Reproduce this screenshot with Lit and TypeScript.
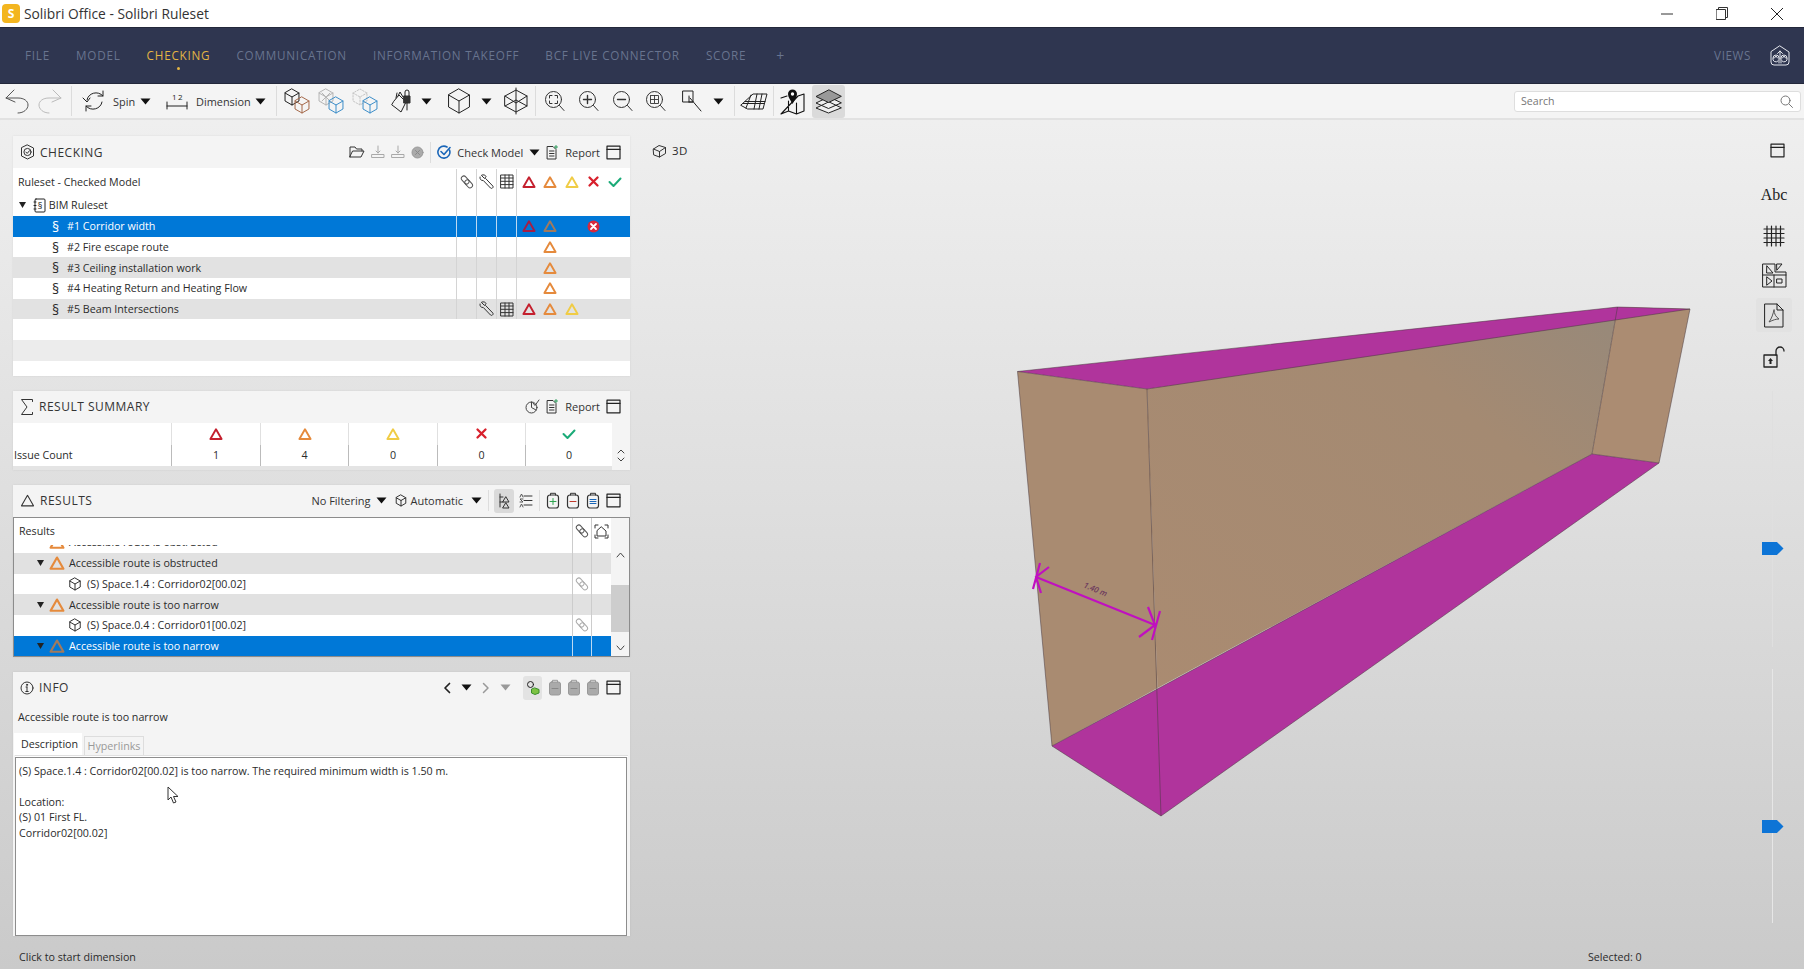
import { LitElement, html, css, svg } from "lit";
import { customElement } from "lit/decorators.js";

const RED = "#c4202e", ORG = "#e58a3c", YEL = "#f0cc45", XRED = "#d8202c", GRN = "#1bab78";

const ic = (w: number, h: number, c: any, vw = w, vh = h) =>
  html`<svg class="ic" width=${w} height=${h} viewBox="0 0 ${vw} ${vh}" fill="none" stroke="#333" stroke-width="1" stroke-linecap="round" stroke-linejoin="round">${c}</svg>`;

const tri = (col: string, s = 14, sw = 1.9) => ic(s, s, svg`<path d="M7 2.2 L12.6 12 H1.4 Z" stroke=${col} stroke-width=${sw}/>`, 14, 14);
const xm = (s = 13) => ic(s, s, svg`<path d="M2.5 2.5 L10.5 10.5 M10.5 2.5 L2.5 10.5" stroke=${XRED} stroke-width="2.3"/>`, 13, 13);
const chk = (s = 14) => ic(s, s, svg`<path d="M1.5 7 L5.5 11 L12.5 3.5" stroke=${GRN} stroke-width="2"/>`, 14, 14);
const xball = () => ic(13, 13, svg`<circle cx="6.5" cy="6.5" r="6" fill="#d8283c" stroke="none"/><path d="M4 4 L9 9 M9 4 L4 9" stroke="#fff" stroke-width="1.8"/>`);
const clip = (col = "#555") => ic(14, 16, svg`<g stroke=${col} transform="rotate(-42 7 8)"><rect x="4.5" y="0.8" width="5" height="9" rx="2.5"/><rect x="4.5" y="6" width="5" height="9" rx="2.5"/></g>`);
const wrench = () => ic(16, 16, svg`<path d="M2.5 1.5 L5.5 4.5 L7 2.5 C6.5 1 4.5 0.5 3 1 M1 3 C0.5 5 2 6.8 4.3 6.5 L11.5 14 C12.8 15.3 15 13.2 13.8 12 L6.6 4.5"/>`);
const tbl = () => ic(14, 15, svg`<rect x="1" y="1" width="12" height="13"/><path d="M1 4 H13 M1 7.3 H13 M1 10.6 H13 M5 1 V14 M9 1 V14"/>`);
const win = () => ic(15, 15, svg`<rect x="1" y="1.2" width="13" height="12.6" stroke="#222" stroke-width="1.2"/><path d="M1 4.4 H14" stroke="#222" stroke-width="1.2"/>`);
const arrowDn = (col = "#111") => ic(11, 7, svg`<path d="M0.5 0.5 H10.5 L5.5 6.5 Z" fill=${col} stroke="none"/>`);
const hexCube = (cx: number, cy: number, r: number, col: string, extra = "") => {
  const x = r * 0.87, y = r * 0.5;
  return svg`<path stroke=${col} stroke-dasharray=${extra} d="M${cx} ${cy - r} L${cx + x} ${cy - y} V${cy + y} L${cx} ${cy + r} L${cx - x} ${cy + y} V${cy - y} Z M${cx - x} ${cy - y} L${cx} ${cy} L${cx + x} ${cy - y} M${cx} ${cy} V${cy + r}"/>`;
};
const cube = (s = 14) => ic(s, s, hexCube(7, 7, 6, "#333"), 14, 14);
const zoomI = (inner: any) => ic(21, 22, svg`<circle cx="9.5" cy="9.5" r="8"/><path d="M15.5 15.5 L20 20.5"/>${inner}`);
const clipboard = (mark: any, col = "#333") => ic(14, 17, svg`<rect x="1.5" y="3" width="11" height="13" rx="2.5" stroke=${col} stroke-width="1.2"/><path d="M4.5 3 V1.3 H9.5 V3" stroke=${col}/>${mark}`);
const gclip = () => ic(14, 17, svg`<rect x="1.5" y="3" width="11" height="13" rx="2" fill="#aaa" stroke="#999"/><path d="M4.5 3 V1.3 H9.5 V3" stroke="#999"/><path d="M4 9.5 H10" stroke="#888"/>`);

const tools: { i: any; ml: number }[] = [
  { i: ic(25, 25, svg`<path d="M10 1 L2 9 L11 13 M2 9 H14 C20 9 24 12 24 16 C24 20 20 24 14 24" stroke="#555"/>`), ml: 0 },
  { i: ic(25, 25, svg`<path d="M15 1 L23 9 L14 13 M23 9 H11 C5 9 1 12 1 16 C1 20 5 24 11 24" stroke="#bbb"/>`), ml: 9 },
  { i: html`<span class="sep"></span>`, ml: 8 },
  { i: ic(25, 24, svg`<path d="M5 11 C6 4 16 1 21 7 M21 2 V7 H16 M20 13 C19 20 9 23 4 17 M4 22 V17 H9 M1 9 L5 13 L8 9" stroke="#222"/>`), ml: 10 },
  { i: html`<span class="tx">Spin</span>`, ml: 6 },
  { i: arrowDn(), ml: 5 },
  { i: ic(22, 20, svg`<path d="M1 11 V18 M21 11 V18 M1 15 H21" stroke="#222"/><text x="6" y="9" font-size="8" stroke="none" fill="#222" font-family="Open Sans">1</text><text x="12" y="9" font-size="8" stroke="none" fill="#222" font-family="Open Sans">2</text>`), ml: 15 },
  { i: html`<span class="tx">Dimension</span>`, ml: 8 },
  { i: arrowDn(), ml: 4 },
  { i: html`<span class="sep"></span>`, ml: 10 },
  { i: ic(27, 26, svg`${hexCube(9, 9, 8, "#222")}${hexCube(19, 17, 8, "#a5694a")}`), ml: 6 },
  { i: ic(27, 26, svg`${hexCube(9, 9, 8, "#b5b5b5")}<path d="M5 5 L13 13 M13 5 L5 13" stroke="#b5b5b5"/>${hexCube(19, 17, 8, "#3d8ec9")}`), ml: 7 },
  { i: ic(27, 26, svg`${hexCube(9, 9, 8, "#c4c4c4", "1.5 1.5")}${hexCube(19, 17, 8, "#3d8ec9")}`), ml: 7 },
  { i: ic(24, 26, svg`<path d="M4 13 L9 7 L12 10 L16 14 L11 24 L6 20 L2 17 Z M8 8 L10 4 L13 9 M6 10 L7 5" stroke="#222"/><rect x="14" y="8" width="6" height="7" fill="#333"/><path d="M15 8 V4 A2 2 0 0 1 19 4 V8 M17 15 V22" stroke="#222"/>`), ml: 12 },
  { i: arrowDn(), ml: 7 },
  { i: ic(24, 26, hexCube(12, 13, 12, "#222")), ml: 15 },
  { i: arrowDn(), ml: 10 },
  { i: ic(24, 28, svg`<path d="M12 1 V27 M1 9 L12 3 L23 9 V19 L12 25 L1 19 Z M1 9 L12 16 L23 9 M1 19 L12 13 L23 19" stroke="#222"/>`), ml: 12 },
  { i: html`<span class="sep"></span>`, ml: 7 },
  { i: zoomI(svg`<path d="M5.5 8 V5.5 H8 M11 5.5 H13.5 V8 M13.5 11 V13.5 H11 M8 13.5 H5.5 V11"/>`), ml: 8 },
  { i: zoomI(svg`<path d="M5.5 9.5 H13.5 M9.5 5.5 V13.5" stroke-width="1.4"/>`), ml: 13 },
  { i: zoomI(svg`<path d="M5.5 9.5 H13.5" stroke-width="1.4"/>`), ml: 13 },
  { i: zoomI(svg`<rect x="5.5" y="5.5" width="8" height="8" stroke-dasharray="1 1"/><path d="M9.5 5.5 V13.5 M5.5 9.5 H13.5" stroke-dasharray="1 1"/>`), ml: 12 },
  { i: ic(20, 22, svg`<rect x="1" y="1" width="10" height="11" stroke="#222"/><path d="M7 6 V12 M7 12 H11 M8 8 L19 21" stroke="#222"/>`), ml: 16 },
  { i: arrowDn(), ml: 11 },
  { i: html`<span class="sep"></span>`, ml: 10 },
  { i: ic(28, 20, svg`<path d="M1 14 L13 3 H27 L23 18 H8 Z M5 10.5 H25 M3 12.5 H24 M11 4 L6 17 M17 3 L14 18 M22 3 L19 18" stroke="#222"/>`), ml: 5 },
  { i: html`<span class="sep"></span>`, ml: 5 },
  { i: ic(25, 27, svg`<path d="M1 10 L7 8 M18 8 L24 6 V23 L16.5 26 L8.5 23 L1 26 Z M8.5 13 V23 M16.5 15 V26" stroke="#111" stroke-width="1.1"/><path d="M12.5 16 C10.5 12 8 9.5 8 6 A4.5 4.5 0 0 1 17 6 C17 9.5 14.5 12 12.5 16 Z" fill="#111" stroke="none"/><circle cx="12.5" cy="6" r="1.7" fill="#fff" stroke="none"/>`), ml: 6 },
  { i: html`<span class="lay active">${ic(27, 25, svg`<path d="M13.5 13 L1 19 L13.5 24 L26 19 Z M13.5 8 L1 14 L13.5 19.5 L26 14 Z" stroke="#222" fill="#f0f0f0"/><path d="M13.5 1 L1 7.5 L13.5 13.5 L26 7.5 Z" stroke="#222" fill="#999"/>`)}</span>`, ml: 7 },
];

const tabs = [
  ["FILE", 0], ["MODEL", 0], ["CHECKING", 1], ["COMMUNICATION", 0], ["INFORMATION TAKEOFF", 0], ["BCF LIVE CONNECTOR", 0], ["SCORE", 0], ["+", 0],
] as [string, number][];

const rules = [
  { t: "#1 Corridor width", sel: 1, flags: [RED, ORG, null, "x", null] },
  { t: "#2 Fire escape route", flags: [null, ORG] },
  { t: "#3 Ceiling installation work", alt: 1, flags: [null, ORG] },
  { t: "#4 Heating Return and Heating Flow", flags: [null, ORG] },
  { t: "#5 Beam Intersections", alt: 1, tools: 1, flags: [RED, ORG, YEL] },
];

const results = [
  { t: "Accessible route is obstructed", k: "g", alt: 1 },
  { t: "(S) Space.1.4 : Corridor02[00.02]", k: "s" },
  { t: "Accessible route is too narrow", k: "g", alt: 1 },
  { t: "(S) Space.0.4 : Corridor01[00.02]", k: "s" },
  { t: "Accessible route is too narrow", k: "g", sel: 1 },
];

@customElement("app-root")
export class AppRoot extends LitElement {
  static styles = css`
    :host { display: block; width: 1804px; height: 969px; overflow: hidden; font-family: "Open Sans", "Noto Sans", sans-serif; font-size: 10.7px; color: #2b2b2b; }
    * { box-sizing: border-box; }
    .ic { display: block; flex: none; }
    .app { display: flex; flex-direction: column; height: 969px; }
    .title { height: 27px; background: #fff; display: flex; align-items: center; padding-left: 2px; font-size: 13.8px; color: #333; flex: none; }
    .logo { width: 18px; height: 19px; border-radius: 4px; background: #f3b51f; color: #fff; font-weight: 700; font-size: 12px; display: flex; align-items: center; justify-content: center; margin-right: 4px; }
    .wc { margin-left: auto; display: flex; align-items: center; }
    .wc span { width: 55px; display: flex; justify-content: center; }
    .nav { height: 57px; background: #2f3650; border-top: 1px solid #23283b; border-bottom: 1px solid #23283b; display: flex; align-items: center; padding: 0 14px 1px 25px; flex: none; }
    .tab { font-size: 11.7px; letter-spacing: 0.78px; color: #68748f; margin-right: 26px; position: relative; white-space: nowrap; }
    .tab.on { color: #e3b544; }
    .tab.on::after { content: ""; position: absolute; left: 50%; bottom: -7px; width: 3px; height: 3px; margin-left: -1.5px; border-radius: 50%; background: #e3b544; }
    .plus { font-size: 14px; margin-left: 4px; }
    .views { margin-left: auto; margin-right: 19px; letter-spacing: .6px; }
    .tb { height: 36px; background: #f4f4f4; border-bottom: 2px solid #e2e2e2; display: flex; align-items: center; padding-left: 4px; flex: none; position: relative; }
    .tool { display: flex; align-items: center; }
    .tx { font-size: 10.9px; color: #333; }
    .sep { display: block; width: 1px; height: 30px; background: #dcdcdc; }
    .lay { display: flex; width: 33px; height: 33px; align-items: center; justify-content: center; }
    .lay.active { background: #dadada; border-radius: 3px; }
    .lay.t { width: 20px; height: 24px; margin: 0 -1px; }
    .lay.i { width: 19px; height: 24px; background: #e3e3e3; margin-left: 6px; }
    .search { margin-left: auto; margin-right: 3px; width: 287px; height: 21px; background: #fff; border: 1px solid #dedede; border-radius: 3px; display: flex; align-items: center; justify-content: space-between; padding: 0 7px 0 6px; color: #777; font-size: 10.6px; }
    .body { flex: 1; display: flex; min-height: 0; background: linear-gradient(#efefef, #cacaca); }
    .left { width: 643px; flex: none; padding: 16px 0 0 13px; display: flex; flex-direction: column; gap: 15px; }
    .panel { width: 617px; background: #f4f4f4; box-shadow: 0 0 2px rgba(0,0,0,.08); flex: none; }
    .ph { display: flex; align-items: center; height: 32px; padding: 0 9px 0 7px; font-size: 12px; letter-spacing: .5px; color: #333; }
    .ph .lbl { margin-left: 5px; }
    .ph .acts { margin-left: auto; display: flex; align-items: center; gap: 6px; font-size: 11px; letter-spacing: 0; }
    .ph .mv { display: flex; align-items: center; gap: 10px; }
    .ph .cl { display: flex; align-items: center; gap: 5px; }
    .ph .cb2 { margin: 0 -3px 0 2px; }
    .ph .ar2 { margin-left: 2px; }
    .vs { width: 1px; height: 21px; background: #ddd; }
    .row { display: grid; grid-template-columns: 443px 20px 20px 20px 114px; height: 20.7px; background: #fff; align-items: stretch; }
    .row.alt { background: #e2e2e2; }
    .row.alt2 { background: #ececec; }
    .row.sel { background: #0078d7; color: #fff; }
    .row.head { height: 26px; padding-top: 1px; }
    .row.first { height: 22px; }
    .row.last { height: 15px; }
    .row.plain { display: block; }
    .name { display: flex; align-items: center; white-space: nowrap; overflow: hidden; padding-left: 2px; }
    .name.l1 { padding-left: 5px; }
    .name.l2 { padding-left: 36px; }
    .sec { width: 13px; font-size: 14px; margin-right: 5px; text-align: center; }
    .c { border-left: 1px solid #d4d4d4; display: flex; align-items: center; justify-content: center; }
    .sel .c { border-left-color: #bcd9f2; }
    .fl { border-left: 1px solid #d4d4d4; display: flex; align-items: center; padding-left: 1px; }
    .sel .fl { border-left-color: #bcd9f2; }
    .fl span { width: 21.6px; display: flex; justify-content: center; }
    .tg { width: 7px; height: 6px; margin: 0 7px 0 4px; flex: none; }
    .sumgrid { display: grid; grid-template-columns: 158px 89px 88px 89px 88px 87px 18px; background: #fff; }
    .sumgrid > div { height: 22px; display: flex; align-items: center; justify-content: center; border-left: 1px solid #e0e0e0; }
    .sumgrid > .n { justify-content: flex-start; padding-left: 1px; border-left: 0; }
    .sumgrid > .r { height: 21px; border-left-color: #bbb; }
    .sumgrid > .s { background: #f4f4f4; border: 0; }
    .arrows { display: flex; flex-direction: column; align-items: center; gap: 3px; }
    .sumfoot { height: 4px; background: #e4e4e4; width: 599px; }
    .rbox { border: 1px solid #8c8c8c; background: #fff; height: 140px; display: flex; }
    .rt { flex: 1; min-width: 0; }
    .rrow { display: grid; grid-template-columns: 1fr 19px 20px; height: 20.7px; background: #fff; }
    .rrow.alt { background: #e1e1e1; }
    .rrow.sel { background: #0078d7; color: #fff; }
    .rrow.head { height: 27px; }
    .rrow.cut { height: 8px; overflow: hidden; }
    .rrow.cut > * { height: 20.7px; margin-top: -12.7px; }
    .rrow .c { border-left-color: #ccc; }
    .rrow.sel .c { border-left-color: #bcd9f2; }
    .rtxt { display: flex; align-items: center; white-space: nowrap; }
    .rtxt.g { padding-left: 23px; }
    .rtxt.s { padding-left: 54px; }
    .rtxt.g .ti { margin: 0 4px 0 0; }
    .rtxt .cb { margin-right: 5px; }
    .rtxt .tog { width: 5px; flex: none; }
    .scr { width: 18px; flex: none; background: #f4f4f4; display: flex; flex-direction: column; align-items: center; position: relative; }
    .scr .up { margin-top: 34px; }
    .scr .th { position: absolute; left: 0; right: 0; top: 67px; height: 47px; background: #cdcdcd; }
    .scr .dn { margin-top: auto; margin-bottom: 5px; }
    .sub { padding: 6px 0 0 5px; height: 29px; font-size: 10.7px; }
    .tabs { display: flex; align-items: flex-end; gap: 2px; height: 22px; padding-left: 1px; }
    .t1 { height: 22px; padding: 0 7px; background: #fff; display: flex; align-items: center; width: 68px; }
    .t2 { height: 19px; width: 60px; border: 1px solid #ddd; border-bottom: 0; color: #999; display: flex; align-items: center; justify-content: center; }
    .strip { height: 2px; background: #fff; border-top: 1px solid #e0e0e0; margin: 0 2px; }
    .desc { margin: 0 3px 0 2px; height: 179px; border: 1px solid #8d8d8d; background: #fff; padding: 6px 3px; line-height: 15.5px; white-space: pre; position: relative; }
    .cursor { position: absolute; left: 151px; top: 28px; }
    .status { padding: 5px 0 0 6px; margin-top: -6px; }
    .vp { flex: 1; position: relative; display: flex; flex-direction: column; justify-content: space-between; min-width: 0; }
    .vp > svg { position: absolute; left: 0; top: 0; }
    .vh { position: relative; display: flex; align-items: center; gap: 5px; padding: 23px 0 0 9px; font-size: 11.5px; letter-spacing: .4px; }
    .sel0 { position: relative; align-self: flex-start; margin: 0 0 5px 945px; }
    .rail { width: 64px; flex: none; display: flex; flex-direction: column; align-items: center; padding-top: 23px; position: relative; }
    .rail .abc { font-family: "Liberation Serif", serif; font-size: 16px; margin: 28px 0 0 4px; color: #222; height: 18px; line-height: 18px; }
    .rb { display: flex; justify-content: center; margin-left: 4px; }
    .rb.w { margin-left: 10px; }
    .rb.g { margin-top: 21px; }
    .rb.v { margin-top: 16px; }
    .rb.l { margin-top: 14px; }
    .rb.act { background: #e2e2e2; width: 36px; height: 34px; align-items: center; border-radius: 3px; margin-top: 10px; }
    .track { width: 1px; background: #dfdfdf; position: relative; flex: none; }
    .tr1 { height: 256px; margin-top: 23px; }
    .tr2 { height: 254px; margin-top: 22px; background: #e6e6e6; }
    .hd { position: absolute; left: -10px; top: 151px; width: 22px; height: 13px; background: #0d74d6; clip-path: polygon(0 0, 70% 0, 100% 50%, 70% 100%, 0 100%); }
  `;

  render() {
    const tgDown = html`<svg class="tg" viewBox="0 0 7 6"><path d="M0 0 H7 L3.5 6 Z" fill="#222"/></svg>`;
    const small = ic(7, 6, svg`<path d="M0 0 H7 L3.5 6 Z" fill="#222" stroke="none"/>`);
    return html`<div class="app">
      <div class="title">
        <span class="logo">S</span>Solibri Office - Solibri Ruleset
        <span class="wc">
          <span>${ic(12, 12, svg`<path d="M0 6 H12" stroke="#333"/>`)}</span>
          <span>${ic(12, 13, svg`<rect x="0.5" y="2.5" width="9" height="10" stroke="#333"/><path d="M2.5 2.5 V0.5 H11.5 V10.5 H9.5" stroke="#333"/>`)}</span>
          <span>${ic(12, 12, svg`<path d="M0 0 L12 12 M12 0 L0 12" stroke="#222"/>`)}</span>
        </span>
      </div>
      <div class="nav">
        ${tabs.map(([t, on]) => html`<span class="tab ${on ? "on" : ""} ${t === "+" ? "plus" : ""}">${t}</span>`)}
        <span class="tab views">VIEWS</span>
        ${ic(20, 21, svg`<path d="M10 1 L19 7 V17 A3 3 0 0 1 16 20 H4 A3 3 0 0 1 1 17 V7 Z M10 14 V6 M7.5 8.5 L10 6 L12.5 8.5 M3 13 A3 3 0 0 1 9 13 V18 M4.5 13 L6 11 L7.5 13 M11 18 V13 A3 3 0 0 1 17 13 M12.5 13 L14 11 L15.5 13 M3 13 A3 3 0 0 0 8 16 M17 13 A3 3 0 0 1 12 16" stroke="#e6e8ee"/>`)}
      </div>
      <div class="tb">
        ${tools.map((t) => html`<span class="tool" style="margin-left:${t.ml}px">${t.i}</span>`)}
        <div class="search"><span>Search</span>${ic(13, 13, svg`<circle cx="5.5" cy="5.5" r="4.5" stroke="#777"/><path d="M9 9 L12.5 12.5" stroke="#777"/>`)}</div>
      </div>
      <div class="body">
        <div class="left">
          <section class="panel">
            <div class="ph">
              ${ic(15, 16, svg`<path d="M7.5 1 L13.5 4 V12 L7.5 15 L1.5 12 V4 Z" stroke="#333"/><circle cx="7.5" cy="8" r="3.6" stroke="#333"/><path d="M5.8 8 L7.2 9.4 L9.6 6.6" stroke="#333"/>`)}
              <span class="lbl">CHECKING</span>
              <span class="acts">
                ${ic(16, 14, svg`<path d="M1 12 V2 H6 L7.5 4 H13 V6 M1 12 H12 L15 6 H4 Z" stroke="#333"/>`)}
                ${ic(14, 14, svg`<path d="M7 1 V8 M5 6 L7 8 L9 6 M1 9.5 H13 V12.5 H1 Z" stroke="#a9a9a9"/>`)}
                ${ic(14, 14, svg`<path d="M7 1 V8 M5 6 L7 8 L9 6 M1 9.5 H13 V12.5 H1 Z" stroke="#a9a9a9"/>`)}
                ${ic(13, 13, svg`<circle cx="6.5" cy="6.5" r="5.5" fill="#aaa" stroke="#999"/><path d="M4.5 4.5 L8.5 8.5 M8.5 4.5 L4.5 8.5" stroke="#888"/>`)}
                <span class="vs"></span>
                ${ic(14, 14, svg`<path d="M12.5 5 A6 6 0 1 1 10 2" stroke="#1a66b8" stroke-width="1.6"/><path d="M4 6.5 L7 9.5 L13 2.5" stroke="#1a66b8" stroke-width="1.6"/>`)}
                <span>Check Model</span>
                ${arrowDn()}
                ${ic(13, 15, svg`<path d="M1.5 1.5 H7 L10 4.5 V14 H1.5 Z M3.5 6 H8 M3.5 8.5 H8 M3.5 11 H8" stroke="#333"/><path d="M10 0.5 V3.5 M8.5 2 H11.5" stroke="#2a9a5a"/>`)}
                <span>Report</span>
                ${win()}
              </span>
            </div>
            <div class="row head">
              <div class="name l1">Ruleset - Checked Model</div>
              <div class="c">${clip()}</div><div class="c">${wrench()}</div><div class="c">${tbl()}</div>
              <div class="fl"><span>${tri(RED)}</span><span>${tri(ORG)}</span><span>${tri(YEL)}</span><span>${xm()}</span><span>${chk()}</span></div>
            </div>
            <div class="row first">
              <div class="name">${tgDown}${ic(13, 15, svg`<rect x="2" y="1" width="10" height="13" rx="1" stroke="#222"/><path d="M1 4 H3 M1 7.5 H3 M1 11 H3" stroke="#222"/><text x="7" y="10.5" font-size="9" text-anchor="middle" fill="#222" stroke="none">§</text>`)}&nbsp;BIM Ruleset</div>
              <div class="c"></div><div class="c"></div><div class="c"></div><div class="fl"></div>
            </div>
            ${rules.map((r: any) => html`<div class="row ${r.sel ? "sel" : ""} ${r.alt ? "alt" : ""}">
              <div class="name l2"><span class="sec">§</span>${r.t}</div>
              <div class="c"></div>
              <div class="c">${r.tools ? wrench() : ""}</div>
              <div class="c">${r.tools ? tbl() : ""}</div>
              <div class="fl">${r.flags.map((f: any) => html`<span>${f === "x" ? xball() : f ? tri(r.sel ? (f === RED ? "#a51e45" : "#a07a5e") : f) : ""}</span>`)}</div>
            </div>`)}
            <div class="row plain"></div>
            <div class="row plain alt2"></div>
            <div class="row plain last"></div>
          </section>
          <section class="panel">
            <div class="ph">
              ${ic(14, 18, svg`<path d="M12.5 3.5 V1.5 H1.5 L7 9 L1.5 16.5 H12.5 V14.5" stroke="#333"/>`)}
              <span class="lbl">RESULT SUMMARY</span>
              <span class="acts">
                ${ic(15, 15, svg`<circle cx="6.5" cy="8.5" r="5.5" stroke="#444"/><path d="M6.5 3 V8.5 L11 11 M8 4 L10 6.5 L14 1" stroke="#444"/>`)}
                ${ic(13, 15, svg`<path d="M1.5 1.5 H7 L10 4.5 V14 H1.5 Z M3.5 6 H8 M3.5 8.5 H8 M3.5 11 H8" stroke="#333"/><path d="M10 0.5 V3.5 M8.5 2 H11.5" stroke="#2a9a5a"/>`)}
                <span>Report</span>
                ${win()}
              </span>
            </div>
            <div class="sumgrid">
              <div class="n"></div><div>${tri(RED)}</div><div>${tri(ORG)}</div><div>${tri(YEL)}</div><div>${xm()}</div><div>${chk()}</div><div class="s"></div>
              <div class="n r">Issue Count</div>${["1", "4", "0", "0", "0"].map((n) => html`<div class="r">${n}</div>`)}
              <div class="s r"><span class="arrows">${ic(8, 5, svg`<path d="M1 4 L4 1 L7 4" stroke="#444"/>`)}${ic(8, 5, svg`<path d="M1 1 L4 4 L7 1" stroke="#444"/>`)}</span></div>
            </div>
            <div class="sumfoot"></div>
          </section>
          <section class="panel">
            <div class="ph">
              ${tri("#333", 15, 1)}
              <span class="lbl">RESULTS</span>
              <span class="acts">
                <span>No Filtering</span>${arrowDn()}
                <span class="cb2">${ic(12, 13, hexCube(6, 6.5, 5.5, "#333"))}</span>
                <span>Automatic</span><span class="ar2">${arrowDn()}</span>
                <span class="vs"></span>
                <span class="lay t active">${ic(13, 16, svg`<path d="M2 1 V14 M2 4 H5 M2 9 H5" stroke="#333"/><path d="M8 4 L11 9 H5 Z M8 10 L11 15 H5 Z" stroke="#333"/>`)}</span>
                ${ic(14, 15, svg`<path d="M5 3 H13 M5 7.5 H13 M5 12 H13" stroke="#333"/><path d="M1 4 L2.5 1 L4 4 M1 9 H4 L1 6 H4 M1 14 L2.5 11 L4 14" stroke="#555"/>`)}
                <span class="vs"></span>
                ${clipboard(svg`<path d="M4 9.5 H10 M7 6.5 V12.5" stroke="#2ea44f"/>`)}
                ${clipboard(svg`<path d="M4 9.5 H10" stroke="#c0392b"/>`)}
                ${clipboard(svg`<path d="M4 7.5 H10 M4 9.5 H10 M4 11.5 H10" stroke="#1a66b8"/>`)}
                ${win()}
              </span>
            </div>
            <div class="rbox">
              <div class="rt">
                <div class="rrow head">
                  <div class="name l1">Results</div>
                  <div class="c">${clip()}</div>
                  <div class="c">${ic(15, 15, svg`<path d="M1 4 V1 H4 M11 1 H14 V4 M14 11 V14 H11 M4 14 H1 V11 M7.5 3 L12 7 V12 H3 V7 Z" stroke="#333"/>`)}</div>
                </div>
                <div class="rrow cut">
                  <div class="rtxt g">${small}<span class="tog"></span><span class="ti">${tri(ORG, 16)}</span>Accessible route is obstructed</div>
                  <div class="c"></div><div class="c"></div>
                </div>
                ${results.map((r: any) => html`<div class="rrow ${r.alt ? "alt" : ""} ${r.sel ? "sel" : ""}">
                  <div class="rtxt ${r.k}">
                    ${r.k === "g"
                      ? html`${small}<span class="tog"></span><span class="ti">${tri(r.sel ? "#a27a5c" : ORG, 16)}</span>`
                      : html`<span class="cb">${cube()}</span>`}
                    ${r.t}
                  </div>
                  <div class="c">${r.k === "s" ? clip("#aaa") : ""}</div>
                  <div class="c"></div>
                </div>`)}
              </div>
              <div class="scr">
                <span class="up">${ic(9, 6, svg`<path d="M1 5 L4.5 1 L8 5" stroke="#444"/>`)}</span>
                <span class="th"></span>
                <span class="dn">${ic(9, 6, svg`<path d="M1 1 L4.5 5 L8 1" stroke="#444"/>`)}</span>
              </div>
            </div>
          </section>
          <section class="panel">
            <div class="ph">
              ${ic(14, 14, svg`<circle cx="7" cy="7" r="6" stroke="#333"/><path d="M7 6 V10.5 M5.8 10.5 H8.2 M6 6 H7" stroke="#333"/><circle cx="7" cy="3.8" r=".6" fill="#333"/>`)}
              <span class="lbl">INFO</span>
              <span class="acts">
                <span class="mv">
                  ${ic(8, 12, svg`<path d="M6.5 1.5 L2 6 L6.5 10.5" stroke="#222" stroke-width="1.7"/>`)}
                  ${arrowDn()}
                  ${ic(8, 12, svg`<path d="M1.5 1.5 L6 6 L1.5 10.5" stroke="#999" stroke-width="1.5"/>`)}
                  ${arrowDn("#999")}
                </span>
                <span class="lay i active">${ic(14, 15, svg`<circle cx="4.5" cy="4.5" r="3" stroke="#222"/><path d="M9 8 L13 9.5 V13 L9 14.5 L5.5 13 V9.5 Z" fill="#7cc242" stroke="#3a8f2a"/>`)}</span>
                <span class="cl">${gclip()}${gclip()}${gclip()}</span>
                ${win()}
              </span>
            </div>
            <div class="sub">Accessible route is too narrow</div>
            <div class="tabs"><span class="t1">Description</span><span class="t2">Hyperlinks</span></div>
            <div class="strip"></div>
            <div class="desc">(S) Space.1.4 : Corridor02[00.02] is too narrow. The required minimum width is 1.50 m.

Location:
(S) 01 First FL.
Corridor02[00.02]<svg class="cursor" width="12" height="18" viewBox="0 0 12 18"><path d="M1 1 V14 L4 11 L6.5 17 L9 16 L6.5 10.5 H11 Z" fill="#fff" stroke="#333" stroke-width="1"/></svg></div>
          </section>
          <div class="status">Click to start dimension</div>
        </div>
        <div class="vp">
          <svg width="1097" height="849" viewBox="643 120 1097 849" fill="none">
            <defs>
              <linearGradient id="w" x1="0" y1="1" x2="1" y2="0">
                <stop offset="0" stop-color="#aa8b71"/><stop offset=".7" stop-color="#a48a72"/><stop offset="1" stop-color="#97897a"/>
              </linearGradient>
            </defs>
            <path d="M1147 389 L1617.5 307 L1592 454 L1157.5 688 Z" fill="url(#w)"/>
            <path d="M1017.5 371.5 L1147 389 L1157.5 688 L1052 746 Z" fill="#a98b71"/>
            <path d="M1617.5 307 L1690 309 L1659 463 L1592 454 Z" fill="#ab8c72"/>
            <path d="M1017.5 371.5 L1617.5 307 L1690 309 L1147 389 Z" fill="#b0349c"/>
            <path d="M1052 746 L1592 454 L1659 463 L1161 816 Z" fill="#b0349c"/>
            <g stroke="#4a3a40" stroke-opacity=".65" stroke-width=".8">
              <path d="M1017.5 371.5 L1147 389 L1690 309 L1659 463 L1161 816 L1052 746 Z"/>
              <path d="M1017.5 371.5 L1617.5 307 L1690 309"/>
              <path d="M1147 389 L1161 816 M1617.5 307 L1592 454 M1052 746 L1592 454 L1659 463"/>
            </g>
            <g stroke="#c010c0" stroke-width="2.2">
              <path d="M1036 577 L1155 625"/>
              <path d="M1049 567 L1036 577 L1041 593 M1040 563 L1033 589"/>
              <path d="M1148 607 L1155 625 L1139 637 M1160 611 L1152 640"/>
            </g>
            <text x="1083" y="592" font-size="8" font-weight="600" font-style="italic" fill="#6d3a5e" font-family="Open Sans" transform="rotate(22 1095 590)">1.40 m</text>
          </svg>
          <div class="vh">${ic(15, 14, svg`<path d="M1.5 5 L7 1.5 L13.5 3.5 V9.5 L7.5 13 L2 11 Z M1.5 5 L7.5 7.5 L13.5 3.5 M7.5 7.5 V13" stroke="#333"/>`)}3D</div>
          <div class="sel0">Selected: 0</div>
        </div>
        <div class="rail">
          <span class="rb w">${win()}</span>
          <span class="abc">Abc</span>
          <span class="rb g">${ic(22, 22, svg`<path d="M1 4 H21 M1 8.5 H21 M1 13 H21 M1 17.5 H21 M4 1 V21 M8.5 1 V21 M13 1 V21 M17.5 1 V21" stroke="#222" stroke-width="1.2"/>`)}</span>
          <span class="rb v">${ic(25, 25, svg`<path d="M1 1 H13 V9 H24 V24 H1 Z M1 12 H24 M12 12 V24 M15 1 H20 L15 7 Z M5 3 L11 10 H5 Z M5 14 L10 18 L5 22 Z" stroke="#222"/><rect x="15" y="16" width="5" height="4" stroke="#222"/>`)}</span>
          <span class="rb act">${ic(20, 25, svg`<path d="M1 1 H13 L19 7 V24 H1 Z M13 1 V7 H19" stroke="#222"/><path d="M10 7 C9 11 8 15 5 19 C9 17 12 16 15 16 C12 14 10 11 10 7 Z" stroke="#555"/>`)}</span>
          <span class="rb l">${ic(22, 22, svg`<rect x="1" y="9" width="13" height="12" stroke="#222" stroke-width="1.3"/><path d="M13 9 V5 A4 4 0 0 1 21 5" stroke="#222" stroke-width="1.3"/><path d="M7.5 12 L10 15 H8.5 V18 H6.5 V15 H5 Z" fill="#222" stroke="none"/>`)}</span>
          <span class="track tr1"><span class="hd"></span></span>
          <span class="track tr2"><span class="hd"></span></span>
        </div>
      </div>
    </div>`;
  }
}
